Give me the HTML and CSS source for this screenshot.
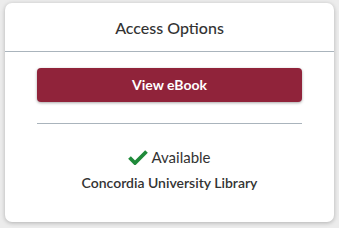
FILE: index.html
```html
<!DOCTYPE html>
<html>
<head>
<meta charset="utf-8">
<link rel="stylesheet" href="styles.css">
</head>
<body>
<div class="card">
  <div class="card-header">Access Options</div>
  <div class="card-body">
    <a class="btn" href="#">View eBook</a>
    <hr class="divider">
    <div class="status">
      <svg class="check" viewBox="0 0 20 16" width="20" height="16"><path d="M1.5 8.5 L7 14 L18.5 2.5" fill="none" stroke="#1f8a3a" stroke-width="3.8"/></svg>
      <span>Available</span>
    </div>
    <div class="library">Concordia University Library</div>
  </div>
</div>
</body>
</html>
```
FILE: styles.css
```css
html, body { margin: 0; padding: 0; }
body {
  background: #ececec;
  font-family: Lato, "Open Sans", sans-serif;
  color: #333;
  padding: 3px 5px 6px 5px;
  height: 228px;
  box-sizing: border-box;
}
.card {
  background: #fff;
  border-radius: 7px;
  box-shadow: 0 1px 4px rgba(0,0,0,0.25);
  height: 219px;
  box-sizing: border-box;
}
.card-header {
  text-align: center;
  font-size: 16px;
  font-weight: 500;
  height: 48px;
  line-height: 49px;
  border-bottom: 1px solid #aab4bc;
}
.card-body {
  padding: 16px 32px 0 32px;
  display: flex;
  flex-direction: column;
  align-items: stretch;
}
.btn {
  display: block;
  background: #90233a;
  color: #fff;
  text-decoration: none;
  text-align: center;
  font-weight: 700;
  font-size: 14px;
  height: 34px;
  line-height: 34px;
  border-radius: 4px;
  box-shadow: 0 1px 3px rgba(0,0,0,0.35);
}
.divider {
  border: 0;
  border-top: 1px solid #aab4bc;
  margin: 21px 0 0 0;
  height: 0;
}
.status {
  margin-top: 24px;
  display: flex;
  justify-content: center;
  align-items: center;
  gap: 3px;
  font-size: 15px;
}
.check { display: block; }
.library {
  margin-top: 8px;
  text-align: center;
  font-size: 14px;
  font-weight: 600;
}
```
